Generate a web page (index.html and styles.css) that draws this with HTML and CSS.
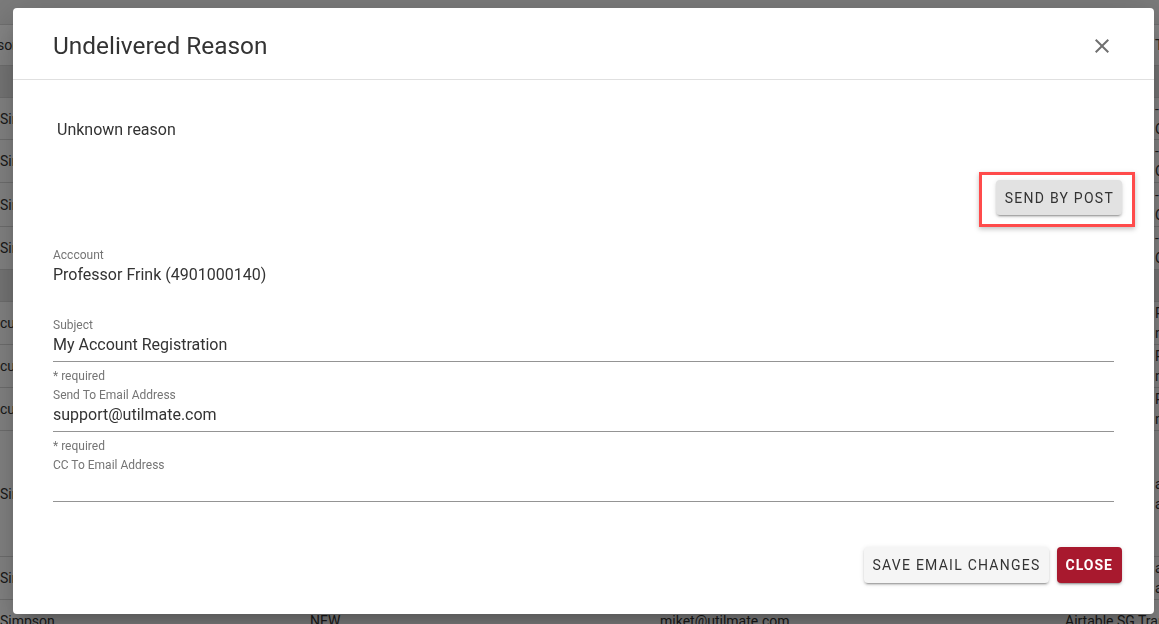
FILE: index.html
```html
<!DOCTYPE html>
<html lang="en">
<head>
<meta charset="utf-8">
<title>Undelivered Reason</title>
<link rel="stylesheet" href="styles.css">
</head>
<body>
<div class="page">
  <div class="toolbar"></div>
  <div class="trow head"><span class="cut">Person</span><span>Status</span><span>Email</span><span>Source</span><span>Type</span></div>
  <div class="trow group"><span></span></div>
  <div class="trow h42"><span>Simpson</span><span>NEW</span><span>miket@utilmate.com</span><span></span><span class="two">-<br>Open</span></div>
  <div class="trow h43"><span>Simpson</span><span>NEW</span><span>miket@utilmate.com</span><span></span><span class="two">-<br>Open</span></div>
  <div class="trow h44"><span>Simpson</span><span>NEW</span><span>miket@utilmate.com</span><span></span><span class="two">-<br>Open</span></div>
  <div class="trow h43"><span>Simpson</span><span>NEW</span><span>miket@utilmate.com</span><span></span><span class="two">-<br>Open</span></div>
  <div class="trow group"><span></span></div>
  <div class="trow h43"><span>cust</span><span>NEW</span><span>miket@utilmate.com</span><span></span><span class="two">Re<br>no</span></div>
  <div class="trow h43"><span>cust</span><span>NEW</span><span>miket@utilmate.com</span><span></span><span class="two">Re<br>no</span></div>
  <div class="trow h43"><span>cust</span><span>NEW</span><span>miket@utilmate.com</span><span></span><span class="two">Re<br>no</span></div>
  <div class="trow tall"><span>Simpson</span><span>NEW</span><span>miket@utilmate.com</span><span></span><span class="two">a<br>a</span></div>
  <div class="trow h43"><span>Simpson</span><span>NEW</span><span>miket@utilmate.com</span><span></span><span class="two">a<br>a</span></div>
  <div class="trow h43"><span>Simpson</span><span>NEW</span><span>miket@utilmate.com</span><span>Airtable SG Transfer</span><span></span></div>
</div>

<div class="backdrop"></div>

<div class="dialog" role="dialog">
  <div class="dlg-head">
    <h2 class="dlg-title">Undelivered Reason</h2>
    <svg class="close-x" viewBox="0 0 24 24" aria-label="close"><path d="M19 6.41L17.59 5 12 10.59 6.41 5 5 6.41 10.59 12 5 17.59 6.41 19 12 13.41 17.59 19 19 17.59 13.41 12z"/></svg>
  </div>
  <div class="dlg-body">
    <p class="reason">Unknown reason</p>
    <div class="post-row">
      <div class="post-wrap">
        <button class="btn btn-post">Send by post</button>
        <span class="highlight"></span>
      </div>
    </div>
    <div class="static">
      <div class="lbl">Acccount</div>
      <div class="val">Professor Frink (4901000140)</div>
    </div>
    <div class="field first">
      <div class="lbl">Subject</div>
      <div class="input">My Account Registration</div>
      <div class="helper">* required</div>
    </div>
    <div class="field">
      <div class="lbl">Send To Email Address</div>
      <div class="input">support@utilmate.com</div>
      <div class="helper">* required</div>
    </div>
    <div class="field">
      <div class="lbl">CC To Email Address</div>
      <div class="input"></div>
    </div>
  </div>
  <div class="dlg-foot">
    <button class="btn btn-save">Save email changes</button>
    <button class="btn btn-close">Close</button>
  </div>
</div>
</body>
</html>
```

FILE: styles.css
```css
* { box-sizing: border-box; }

body {
  margin: 0;
  width: 1159px;
  height: 624px;
  overflow: hidden;
  position: relative;
  background: #fff;
  font-family: Roboto, "Liberation Sans", Arial, sans-serif;
  color: #333;
}

/* background table */
.page {
  font-size: 14px;
  color: #333;
}
.toolbar {
  height: 25px;
  background: #eaeaea;
  border-bottom: 1px solid #d6d6d6;
}
.trow {
  display: grid;
  grid-template-columns: 310px 350px 405px 90px 1fr;
  align-items: center;
  border-bottom: 1px solid #d8d8d8;
  white-space: nowrap;
  overflow: hidden;
  line-height: 20px;
}
.trow.head { height: 41px; }
.trow.group { height: 32px; background: #e4e4e4; }
.trow.h42 { height: 42px; }
.trow.h43 { height: 43px; }
.trow.h44 { height: 44px; }
.trow.tall { height: 126px; }
.cut { text-indent: -24px; }
.two { line-height: 20px; }

.backdrop {
  position: fixed;
  inset: 0;
  background: rgba(0, 0, 0, 0.47);
}

/* dialog */
.dialog {
  position: absolute;
  left: 13px;
  top: 8px;
  width: 1141px;
  height: 606px;
  background: #fff;
  border-radius: 4px;
  box-shadow: 0 11px 15px -7px rgba(0,0,0,.2), 0 24px 38px 3px rgba(0,0,0,.14), 0 9px 46px 8px rgba(0,0,0,.12);
  display: flex;
  flex-direction: column;
}
.dlg-head {
  display: flex;
  align-items: center;
  justify-content: space-between;
  padding: 25px 40px 20px;
  border-bottom: 1px solid #e0e0e0;
}
.dlg-title {
  margin: 0;
  font-size: 24.4px;
  font-weight: 400;
  line-height: 26px;
  color: #333;
}
.close-x {
  width: 24px;
  height: 24px;
  fill: #707070;
}

.dlg-body {
  flex: 1;
  padding: 40px 40px 0;
  display: flex;
  flex-direction: column;
}
.reason {
  margin: 0 0 0 4px;
  font-size: 16px;
  line-height: 20px;
  color: #333;
}
.post-row {
  display: flex;
  justify-content: flex-end;
  margin: 40px -8px 0 0;
}
.post-wrap {
  position: relative;
}
.highlight {
  position: absolute;
  left: -17px;
  top: -8px;
  right: -13px;
  bottom: -12px;
  border: 3px solid #ff4b4b;
  box-shadow: 0 2px 5px rgba(0,0,0,.25);
  pointer-events: none;
}

.static { margin-top: 32px; }
.lbl {
  font-size: 12px;
  line-height: 16px;
  color: #757575;
}
.val {
  margin-top: 2px;
  font-size: 16px;
  line-height: 20px;
  color: #333;
}
.field { margin-top: 3px; }
.field.first { margin-top: 32px; }
.input {
  min-height: 29px;
  padding: 2px 0 6px;
  font-size: 16px;
  line-height: 20px;
  color: #333;
  border-bottom: 1px solid #949494;
}
.helper {
  margin-top: 6px;
  font-size: 12px;
  line-height: 16px;
  color: #757575;
}

.dlg-foot {
  display: flex;
  justify-content: flex-end;
  gap: 8px;
  padding: 0 32px 31px;
}

.btn {
  font-family: inherit;
  font-size: 14px;
  font-weight: 400;
  letter-spacing: 1.25px;
  text-transform: uppercase;
  border: 0;
  border-radius: 4px;
  height: 36px;
  padding: 0 9px;
  color: #333;
  background: #f5f5f5;
  box-shadow: 0 3px 1px -2px rgba(0,0,0,.2), 0 2px 2px 0 rgba(0,0,0,.14), 0 1px 5px 0 rgba(0,0,0,.12);
  cursor: pointer;
}
.btn-post {
  height: 35px;
  padding: 0 8px 0 9px;
  background: #e2e2e2;
}
.btn-save {
  padding: 0 8px;
}
.btn-close {
  background: #a8192e;
  color: #fff;
  font-weight: 700;
  letter-spacing: 1px;
}
```
